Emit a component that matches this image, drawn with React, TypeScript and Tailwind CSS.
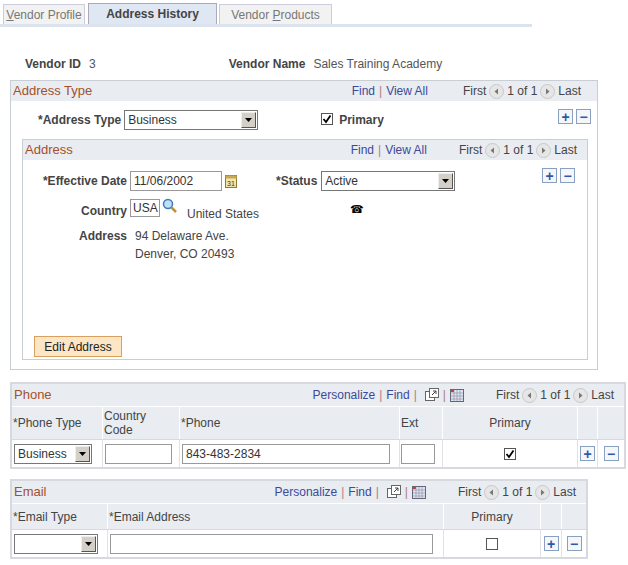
import React from "react";

const F = { fontFamily: '"Liberation Sans", Arial, sans-serif' };

const Arrow = ({ dir }: { dir: "l" | "r" }) => (
  <svg width="15" height="15" viewBox="0 0 15 15" className="inline-block">
    <circle cx="7.5" cy="7.5" r="7" fill="#e6e6e6" stroke="#c8c8c8" />
    {dir === "l" ? <path d="M9 4.5 L5.5 7.5 L9 10.5Z" fill="#777" /> : <path d="M6 4.5 L9.5 7.5 L6 10.5Z" fill="#777" />}
  </svg>
);

const Btn = ({ sign }: { sign: string }) => (
  <span className="w-[15px] h-[15px] border border-[#8aa0c0] bg-[#f4f6fa] flex items-center justify-center text-[#2a5aa8] font-bold text-[14px] leading-none">{sign}</span>
);

const PlusMinus = () => (
  <div className="flex gap-[3px]">
    <Btn sign="+" />
    <Btn sign="−" />
  </div>
);

const Nav = () => (
  <div className="flex items-center gap-[3px] text-[#444]">
    <span>First</span>
    <Arrow dir="l" />
    <span>1 of 1</span>
    <Arrow dir="r" />
    <span>Last</span>
  </div>
);

const Icons = () => (
  <>
    <svg width="14" height="14" viewBox="0 0 14 14" className="ml-[4px]">
      <rect x="0.5" y="3.5" width="9" height="9" fill="#fff" stroke="#666" />
      <rect x="4.5" y="0.5" width="9" height="9" fill="#fff" stroke="#666" />
      <path d="M7 7 L11 3 M8 3 H11 V6" stroke="#444" fill="none" />
    </svg>
    <span className="text-[#b08080] mx-[4px]">|</span>
    <svg width="14" height="13" viewBox="0 0 14 13">
      <rect x="0.5" y="0.5" width="13" height="12" fill="#dde6f4" stroke="#667" />
      <rect x="1" y="1" width="3" height="2" fill="#d33" />
      <path d="M1 4 H13 M1 7 H13 M1 10 H13 M4 1 V12 M7 1 V12 M10 1 V12" stroke="#889" strokeWidth="0.6" />
    </svg>
  </>
);

const Select = ({ w, value }: { w: string; value: string }) => (
  <div className={`${w} h-[20px] border border-[#777] bg-white flex items-center justify-between pl-[3px] pr-[1px]`}>
    <span className="text-[#333]">{value}</span>
    <span className="w-[15px] h-[16px] bg-[#d4d0c8] border border-[#eee] border-r-[#555] border-b-[#555] flex items-center justify-center">
      <svg width="7" height="4" viewBox="0 0 7 4"><path d="M0 0 H7 L3.5 4Z" fill="#000" /></svg>
    </span>
  </div>
);

const Input = ({ w, value = "" }: { w: string; value?: string }) => (
  <div className={`${w} h-[20px] border border-[#999] bg-white flex items-center px-[3px] text-[#333]`}>{value}</div>
);

const Check = ({ on }: { on: boolean }) => (
  <span className="w-[12px] h-[12px] border border-[#555] bg-white inline-flex items-center justify-center">
    {on && <svg width="10" height="10" viewBox="0 0 10 10"><path d="M1.5 5 L4 8 L8.5 1.5" stroke="#000" strokeWidth="1.8" fill="none" /></svg>}
  </span>
);

const Link = ({ children }: { children: React.ReactNode }) => <span className="text-[#3b4a9a]">{children}</span>;
const Sep = () => <span className="text-[#b08080] mx-[4px]">|</span>;

export default function App() {
  return (
    <div style={F} className="w-[628px] h-[565px] bg-white text-[12px] text-[#333] relative overflow-hidden">
      {/* tabs */}
      <div className="flex items-end pl-[3px] pt-[3px] w-[532px] border-b-[3px] border-[#dbe3ef]">
        <div className="w-[82px] h-[20px] border border-[#ccd] border-b-0 bg-[#f2f2f2] flex items-center justify-center text-[#777] mr-[3px]"><span><u>V</u>endor Profile</span></div>
        <div className="w-[129px] h-[21px] border border-[#aab] border-b-0 bg-[#dfe7f2] flex items-center justify-center font-bold text-[#444] mr-[2px]"><span>Address History</span></div>
        <div className="w-[113px] h-[20px] border border-[#ccd] border-b-0 bg-[#f2f2f2] flex items-center justify-center text-[#777]"><span>Vendor <u>P</u>roducts</span></div>
      </div>

      <div className="flex mt-[30px] h-[14px] items-center">
        <span className="ml-[25px] font-bold text-[#444]">Vendor ID</span>
        <span className="ml-[8px] text-[#555]">3</span>
        <span className="ml-[133px] font-bold text-[#444]">Vendor Name</span>
        <span className="ml-[8px] text-[#555]">Sales Training Academy</span>
      </div>

      {/* Address Type */}
      <div className="ml-[10px] mt-[9px] w-[588px] h-[290px] border border-[#c9cdd4] flex flex-col">
        <div className="h-[20px] bg-[#e9ecf1] flex items-center pl-[2px] pr-[16px]">
          <span className="text-[#a3502c] text-[13px]">Address Type</span>
          <div className="ml-auto flex items-center">
            <Link>Find</Link><Sep /><Link>View All</Link>
          </div>
          <div className="ml-[35px]"><Nav /></div>
        </div>
        <div className="relative h-[36px]">
          <div className="absolute right-[6px] top-[8px]"><PlusMinus /></div>
          <div className="flex items-center pt-[9px]">
            <span className="ml-[27px] font-bold text-[#444]">*Address Type</span>
            <div className="ml-[3px]"><Select w="w-[134px]" value="Business" /></div>
            <div className="ml-[63px]"><Check on /></div>
            <span className="ml-[6px] font-bold text-[#444]">Primary</span>
          </div>
        </div>

        {/* Address */}
        <div className="ml-[11px] mt-[2px] w-[566px] h-[221px] border border-[#c9cdd4] flex flex-col relative">
          <div className="h-[20px] bg-[#e9ecf1] flex items-center pl-[2px] pr-[10px]">
            <span className="text-[#a3502c] text-[13px]">Address</span>
            <div className="ml-auto flex items-center">
              <Link>Find</Link><Sep /><Link>View All</Link>
            </div>
            <div className="ml-[32px]"><Nav /></div>
          </div>
          <div className="absolute right-[12px] top-[28px]"><PlusMinus /></div>
          <div className="flex items-center mt-[11px]">
            <span className="w-[104px] text-right font-bold text-[#444]">*Effective Date</span>
            <div className="ml-[3px]"><Input w="w-[92px]" value="11/06/2002" /></div>
            <svg width="12" height="14" viewBox="0 0 12 14" className="ml-[3px]">
              <rect x="0.5" y="1.5" width="11" height="12" fill="#f5e6a8" stroke="#8a7a40" />
              <rect x="0.5" y="1.5" width="11" height="3" fill="#c8a850" />
              <text x="2" y="12" fontSize="7" fill="#333" fontFamily="Liberation Sans">31</text>
            </svg>
            <span className="ml-[39px] font-bold text-[#444]">*Status</span>
            <div className="ml-[4px]"><Select w="w-[134px]" value="Active" /></div>
          </div>
          <div className="flex items-start mt-[8px] h-[24px]">
            <span className="w-[104px] text-right font-bold text-[#444] mt-[3px]">Country</span>
            <div className="ml-[3px] w-[30px] h-[18px] border border-[#999] px-[2px] text-[#333] flex items-center">USA</div>
            <svg width="16" height="16" viewBox="0 0 16 16" className="ml-[2px] -mt-[1px]">
              <circle cx="6" cy="6" r="4.5" fill="#bde0f7" stroke="#3b7bbf" strokeWidth="1.5" />
              <path d="M9.5 9.5 L14 14" stroke="#c8902a" strokeWidth="2.5" />
            </svg>
            <span className="ml-[9px] mt-[6px] text-[#444]">United States</span>
            <span className="ml-[91px] mt-[2px] text-[#000] text-[11px]">☎</span>
          </div>
          <div className="flex items-start mt-[4px]">
            <span className="w-[104px] text-right font-bold text-[#444]">Address</span>
            <div className="ml-[8px] text-[#444] leading-[18px]">
              <div>94 Delaware Ave.</div>
              <div>Denver, CO 20493</div>
            </div>
          </div>
          <div className="mt-auto mb-[2px] ml-[11px] w-[88px] h-[21px] bg-[#fce6c6] border border-[#d9a060] flex items-center justify-center text-[#222]">Edit Address</div>
        </div>
      </div>

      {/* Phone */}
      <div className="ml-[10px] mt-[12px] w-[616px] border-2 border-[#d6d9de]">
        <div className="h-[22px] bg-[#e9ecf1] flex items-center pl-[2px] pr-[10px]">
          <span className="text-[#a3502c] text-[13px]">Phone</span>
          <div className="ml-auto flex items-center">
            <Link>Personalize</Link><Sep /><Link>Find</Link><Sep /><Icons />
          </div>
          <div className="ml-[32px]"><Nav /></div>
        </div>
        <div className="flex h-[33px] bg-[#e9ecf1] border-t border-[#fff] text-[#444]">
          <div className="w-[91px] border-r border-white flex items-center pl-[1px]">*Phone Type</div>
          <div className="w-[77px] border-r border-white flex items-center pl-[1px] leading-[14px]">Country<br />Code</div>
          <div className="w-[220px] border-r border-white flex items-center pl-[1px]">*Phone</div>
          <div className="w-[43px] border-r border-white flex items-center pl-[1px]">Ext</div>
          <div className="w-[135px] border-r border-white flex items-center justify-center">Primary</div>
          <div className="w-[20px] border-r border-white" />
          <div className="flex-1" />
        </div>
        <div className="flex h-[28px] border-t border-[#d6d9de] items-center">
          <div className="w-[91px] border-r border-[#e0e2e6] h-full flex items-center pl-[2px]"><Select w="w-[78px]" value="Business" /></div>
          <div className="w-[77px] border-r border-[#e0e2e6] h-full flex items-center pl-[2px]"><Input w="w-[67px]" /></div>
          <div className="w-[220px] border-r border-[#e0e2e6] h-full flex items-center pl-[2px]"><Input w="w-[208px]" value="843-483-2834" /></div>
          <div className="w-[43px] border-r border-[#e0e2e6] h-full flex items-center pl-[1px]"><Input w="w-[34px]" /></div>
          <div className="w-[135px] border-r border-[#e0e2e6] h-full flex items-center justify-center"><Check on /></div>
          <div className="w-[20px] border-r border-[#e0e2e6] h-full flex items-center justify-center"><Btn sign="+" /></div>
          <div className="flex-1 h-full flex items-center justify-center"><Btn sign="−" /></div>
        </div>
      </div>

      {/* Email */}
      <div className="ml-[10px] mt-[10px] w-[578px] border-2 border-[#d6d9de]">
        <div className="h-[22px] bg-[#e9ecf1] flex items-center pl-[2px] pr-[10px]">
          <span className="text-[#a3502c] text-[13px]">Email</span>
          <div className="ml-auto flex items-center">
            <Link>Personalize</Link><Sep /><Link>Find</Link><Sep /><Icons />
          </div>
          <div className="ml-[32px]"><Nav /></div>
        </div>
        <div className="flex h-[26px] bg-[#e9ecf1] border-t border-white text-[#444]">
          <div className="w-[96px] border-r border-white flex items-center pl-[1px]">*Email Type</div>
          <div className="w-[336px] border-r border-white flex items-center pl-[1px]">*Email Address</div>
          <div className="w-[97px] border-r border-white flex items-center justify-center">Primary</div>
          <div className="w-[21px] border-r border-white" />
          <div className="flex-1" />
        </div>
        <div className="flex h-[28px] border-t border-[#d6d9de] items-center">
          <div className="w-[96px] border-r border-[#e0e2e6] h-full flex items-center pl-[2px]"><Select w="w-[84px]" value="" /></div>
          <div className="w-[336px] border-r border-[#e0e2e6] h-full flex items-center pl-[2px]"><Input w="w-[323px]" /></div>
          <div className="w-[97px] border-r border-[#e0e2e6] h-full flex items-center justify-center"><Check on={false} /></div>
          <div className="w-[21px] border-r border-[#e0e2e6] h-full flex items-center justify-center"><Btn sign="+" /></div>
          <div className="flex-1 h-full flex items-center justify-center"><Btn sign="−" /></div>
        </div>
      </div>
    </div>
  );
}
